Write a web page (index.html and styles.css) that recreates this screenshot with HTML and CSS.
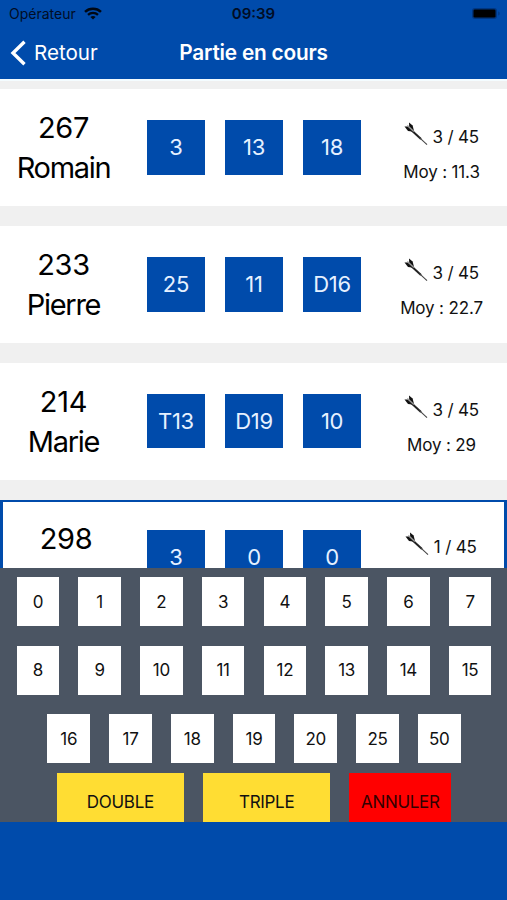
FILE: index.html
```
<!DOCTYPE html>
<html lang="fr">
  <head>
    <meta charset="UTF-8" />
    <meta name="viewport" content="width=device-width, initial-scale=1" />
    <title>Partie en cours</title>
    <link rel="stylesheet" href="styles.css">
  </head>
  <body>
    <svg class="symbols">
      <symbol id="dart" viewBox="0 0 24 24">
        <path d="M5 6L17 17" stroke="#222" stroke-width="2" />
        <path d="M15.5 15.6L23 22.6" stroke="#444" stroke-width="1.1" />
        <path d="M.5 4.6L4 4.4L9.8 9.8L4 9Z" fill="#111" />
        <path d="M5 .6L8.6 3.6L10.2 9.8L5.2 4.8Z" fill="#111" />
        <path d="M3.4 3.6L9.8 9.5" stroke="#999" stroke-width="1.3" />
      </symbol>
    </svg>

    <header class="header">
      <div class="status-bar">
        <div class="operator">
          <span>Opérateur</span>
          <svg class="wifi" viewBox="0 0 18 13" fill="none" stroke="#000814">
            <path d="M1 4.8C5.5 .6 12.5 .6 17 4.8" stroke-width="2.5" />
            <path d="M4 7.8C6.8 5.2 11.2 5.2 14 7.8" stroke-width="2.3" />
            <path d="M9 12.6L6.4 10C7.8 8.6 10.2 8.6 11.6 10Z" fill="#000814" stroke="none" />
          </svg>
        </div>
        <span class="time">09:39</span>
        <svg class="battery" viewBox="0 0 30 14">
          <rect x="1" y="1" width="25" height="11" rx="3" fill="#003681" />
          <rect x="2.5" y="2.5" width="22" height="8" rx="1.3" fill="#000" />
          <path d="M27.3 4.5C29 5 29 8 27.3 8.5Z" fill="#003681" />
        </svg>
      </div>
      <div class="nav-bar">
        <a class="back">
          <svg class="chevron" viewBox="0 0 16 26"><path d="M14.5 1.8L3 13L14.5 24.2" fill="none" stroke="#fff" stroke-width="3.4" /></svg>
          <span>Retour</span>
        </a>
        <h1>Partie en cours</h1>
      </div>
    </header>

    <main class="players">
      <section class="player">
        <div class="score"><p>267</p><p class="name">Romain</p></div>
        <div class="throws"><span>3</span><span>13</span><span>18</span></div>
        <div class="stats">
          <p class="darts"><svg class="dart"><use href="#dart" /></svg>3 / 45</p>
          <p>Moy : 11.3</p>
        </div>
      </section>
      <section class="player">
        <div class="score"><p>233</p><p class="name">Pierre</p></div>
        <div class="throws"><span>25</span><span>11</span><span>D16</span></div>
        <div class="stats">
          <p class="darts"><svg class="dart"><use href="#dart" /></svg>3 / 45</p>
          <p>Moy : 22.7</p>
        </div>
      </section>
      <section class="player">
        <div class="score"><p>214</p><p class="name">Marie</p></div>
        <div class="throws"><span>T13</span><span>D19</span><span>10</span></div>
        <div class="stats">
          <p class="darts"><svg class="dart"><use href="#dart" /></svg>3 / 45</p>
          <p>Moy : 29</p>
        </div>
      </section>
      <section class="player active">
        <div class="score"><p>298</p></div>
        <div class="throws"><span>3</span><span>0</span><span>0</span></div>
        <div class="stats">
          <p class="darts"><svg class="dart"><use href="#dart" /></svg>1 / 45</p>
        </div>
      </section>
    </main>

    <div class="keyboard">
      <div class="keys">
        <button>0</button><button>1</button><button>2</button><button>3</button>
        <button>4</button><button>5</button><button>6</button><button>7</button>
      </div>
      <div class="keys">
        <button>8</button><button>9</button><button>10</button><button>11</button>
        <button>12</button><button>13</button><button>14</button><button>15</button>
      </div>
      <div class="keys">
        <button>16</button><button>17</button><button>18</button><button>19</button>
        <button>20</button><button>25</button><button>50</button>
      </div>
      <div class="actions">
        <button class="multiplier">DOUBLE</button>
        <button class="multiplier">TRIPLE</button>
        <button class="cancel">ANNULER</button>
      </div>
    </div>
  </body>
</html>
```
FILE: styles.css
```
* {
  box-sizing: border-box;
}
body {
  margin: 0;
  height: 900px;
  overflow: hidden;
  font-family: Inter, "Liberation Sans", sans-serif;
  background-color: #004bab;
  color: #000;
}
h1, p {
  margin: 0;
  font-weight: 400;
}
button {
  padding: 0;
  border: none;
  font-family: inherit;
  font-size: 17px;
  letter-spacing: -0.3px;
  color: #111;
  cursor: pointer;
}
.symbols {
  display: none;
}

/* header */
.header {
  height: 79px;
  color: #fff;
}
.status-bar {
  display: grid;
  grid-template-columns: 1fr auto 1fr;
  align-items: center;
  height: 27px;
  padding: 0 6px 0 9px;
  color: #000d26;
  font-size: 14px;
}
.operator {
  display: flex;
  align-items: center;
  gap: 8px;
}
.wifi {
  width: 18px;
  height: 13px;
}
.time {
  margin-right: 3px;
  font-size: 15px;
  font-weight: 600;
}
.battery {
  justify-self: end;
  width: 30px;
  height: 14px;
}
.nav-bar {
  display: grid;
  grid-template-columns: 1fr auto 1fr;
  align-items: center;
  height: 51px;
  padding: 0 10px;
}
.back {
  display: flex;
  align-items: center;
  gap: 8px;
  font-size: 20.6px;
}
.chevron {
  width: 16px;
  height: 26px;
}
.nav-bar h1 {
  font-size: 20.8px;
  font-weight: 600;
  letter-spacing: -0.2px;
}

/* players */
.players {
  display: flex;
  flex-direction: column;
  gap: 19.8px;
  height: 489px;
  padding-top: 8.4px;
  border-top: 2px solid #f4fcff;
  background-color: #f0f0f0;
  overflow: hidden;
}
.player {
  display: grid;
  grid-template-columns: 127px 254px 1fr;
  flex: none;
  height: 117px;
  background-color: #fff;
}
.score {
  padding-top: 19px;
  font-size: 29px;
  line-height: 39.7px;
  letter-spacing: -0.3px;
  text-align: center;
}
.name {
  letter-spacing: -1.3px;
}
.throws {
  display: flex;
  justify-content: center;
  gap: 19.4px;
  padding-top: 30.7px;
}
.throws span {
  width: 58.7px;
  height: 54.7px;
  background-color: #004bab;
  color: #e6f1ff;
  font-size: 22px;
  line-height: 55.4px;
  letter-spacing: -0.3px;
  text-align: center;
}
.stats {
  padding: 30.3px 5px 0 0;
  font-size: 17px;
  line-height: 35px;
  letter-spacing: -0.15px;
  text-align: center;
  color: #111;
}
.darts {
  display: flex;
  justify-content: center;
  gap: 4.5px;
}
.dart {
  width: 24px;
  height: 24px;
  margin-top: 2px;
}
.active {
  grid-template-columns: 125px 252px 1fr;
  border: 3px solid #004bab;
  border-top-width: 2px;
}
.active .score {
  padding: 17px 0 0 1px;
}
.active .stats {
  padding: 28.3px 2px 0 0;
}
.active .throws {
  padding-top: 28.7px;
}

/* keyboard */
.keyboard {
  height: 254px;
  padding: 9.3px 0 0 1px;
  background-color: #4b5563;
  overflow: hidden;
}
.keys {
  display: flex;
  justify-content: center;
  gap: 19.05px;
  margin-bottom: 19.5px;
}
.keys button {
  width: 42.7px;
  height: 49px;
  background-color: #fff;
}
.actions {
  display: flex;
  justify-content: center;
  gap: 19.3px;
  margin-top: -9.8px;
}
.actions button {
  height: 58px;
}
.multiplier {
  width: 127px;
  background-color: #ffdd33;
}
.actions .cancel {
  width: 101.7px;
  background-color: #f00;
  color: #300;
}
```
